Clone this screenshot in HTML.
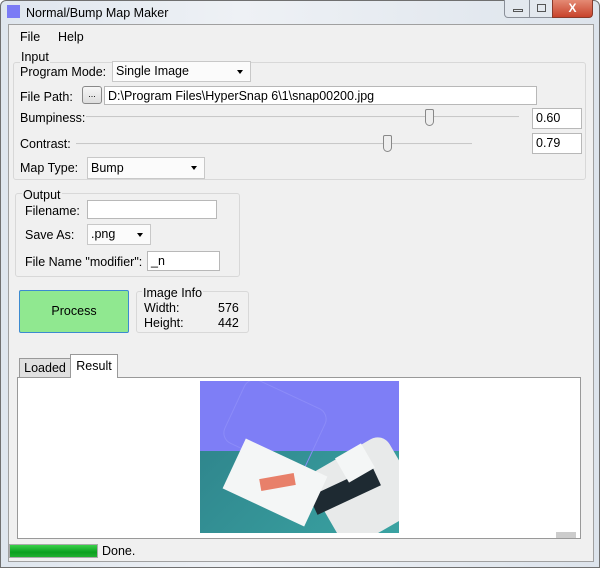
<!DOCTYPE html><html><head><style>
*{box-sizing:border-box}
body{margin:0;width:600px;height:568px;overflow:hidden;background:#fff;font-family:"Liberation Sans",sans-serif;font-size:12.5px;color:#000;position:relative}
.a{position:absolute}
.grp{position:absolute;border:1px solid #d8d8d8;border-radius:3px}
.lab{position:absolute;background:#f0f0f0;padding:0 1px;line-height:14px}
.tb{position:absolute;background:#fff;border:1px solid #b8b8b8;line-height:18px;padding-left:3px}
.cb{position:absolute;background:#fbfbfb;border:1px solid #c8c8c8;line-height:19px;padding-left:3px}
.cb:after{content:"";position:absolute;right:7px;top:8px;border:3.5px solid transparent;border-top:4px solid #000}
.trk{position:absolute;height:2px;background:#c8c8c8;border-bottom:1px solid #eee}
.th{position:absolute;width:9px;height:17px;background:#eee;border:1px solid #888;border-radius:2px 2px 5px 5px}
.t{position:absolute;top:0}
</style></head><body>
<div class="a" style="left:0;top:0;width:600px;height:568px;background:linear-gradient(90deg,#dfe6ee,#eef1f5 40%,#dde4ec);border:1px solid #707070;border-radius:6px 6px 0 0"></div>
<div class="a" style="left:7px;top:5px;width:13px;height:13px;background:#7b7bf5"></div>
<div class="a" style="left:26px;top:6px;font-size:12.5px">Normal/Bump Map Maker</div>
<div class="a" style="left:504px;top:0;width:26px;height:18px;border:1px solid #8a8f98;border-top:0;border-radius:0 0 0 4px;background:#e3e8ee"><div class="a" style="left:8px;top:9px;width:10px;height:3px;border:1px solid #555"></div></div>
<div class="a" style="left:529px;top:0;width:24px;height:18px;border:1px solid #8a8f98;border-top:0;background:#e3e8ee"><div class="a" style="left:7px;top:4px;width:9px;height:8px;border:1px solid #555"></div></div>
<div class="a" style="left:552px;top:0;width:41px;height:18px;border:1px solid #8a3a2a;border-top:0;border-radius:0 0 4px 0;background:linear-gradient(#e48a74,#c8432b);color:#fff;font-weight:bold;text-align:center;line-height:16px;font-size:12px">X</div>
<div class="a" style="left:8px;top:24px;width:586px;height:538px;background:#f0f0f0;border:1px solid #a0a0a0"></div>
<div class="a" style="left:20px;top:30px">File</div><div class="a" style="left:58px;top:30px">Help</div>
<div class="grp" style="left:13px;top:62px;width:573px;height:118px"></div>
<div class="lab" style="left:20px;top:50px">Input</div>
<div class="a" style="left:20px;top:65px">Program Mode:</div>
<div class="cb" style="left:112px;top:61px;width:139px;height:21px">Single Image</div>
<div class="a" style="left:20px;top:90px">File Path:</div>
<div class="a" style="left:82px;top:86px;width:20px;height:18px;border:1px solid #888;border-radius:3px;background:linear-gradient(#f6f6f6,#ddd);font-size:9px;text-align:center;line-height:14px">...</div>
<div class="tb" style="left:104px;top:86px;width:433px;height:19px">D:\Program Files\HyperSnap 6\1\snap00200.jpg</div>
<div class="a" style="left:20px;top:111px">Bumpiness:</div>
<div class="trk" style="left:86px;top:116px;width:433px"></div>
<div class="th" style="left:425px;top:109px"></div>
<div class="tb" style="left:532px;top:108px;width:50px;height:21px;line-height:19px">0.60</div>
<div class="a" style="left:20px;top:137px">Contrast:</div>
<div class="trk" style="left:76px;top:143px;width:396px"></div>
<div class="th" style="left:383px;top:135px"></div>
<div class="tb" style="left:532px;top:133px;width:50px;height:21px;line-height:19px">0.79</div>
<div class="a" style="left:20px;top:161px">Map Type:</div>
<div class="cb" style="left:87px;top:157px;width:118px;height:22px;line-height:20px">Bump</div>
<div class="grp" style="left:15px;top:193px;width:225px;height:84px"></div>
<div class="lab" style="left:22px;top:188px">Output</div>
<div class="a" style="left:25px;top:204px">Filename:</div>
<div class="tb" style="left:87px;top:200px;width:130px;height:19px"></div>
<div class="a" style="left:25px;top:228px">Save As:</div>
<div class="cb" style="left:87px;top:224px;width:64px;height:21px">.png</div>
<div class="a" style="left:25px;top:255px">File Name "modifier":</div>
<div class="tb" style="left:147px;top:251px;width:73px;height:20px">_n</div>
<div class="a" style="left:19px;top:290px;width:110px;height:43px;background:#90e890;border:1px solid #3c8ad0;border-radius:2px;text-align:center;line-height:41px">Process</div>
<div class="grp" style="left:136px;top:291px;width:113px;height:42px"></div>
<div class="lab" style="left:142px;top:286px">Image Info</div>
<div class="a" style="left:144px;top:301px">Width:</div><div class="a" style="left:218px;top:301px">576</div>
<div class="a" style="left:144px;top:316px">Height:</div><div class="a" style="left:218px;top:316px">442</div>
<div class="a" style="left:19px;top:358px;width:52px;height:20px;border:1px solid #999;background:#e0e0e0;text-align:center;line-height:19px">Loaded</div>
<div class="a" style="left:70px;top:354px;width:48px;height:24px;border:1px solid #999;border-bottom:0;background:#fff;text-align:center;line-height:23px">Result</div>
<div class="a" style="left:17px;top:377px;width:564px;height:162px;border:1px solid #999;background:#fff"></div>
<div class="a" style="left:71px;top:377px;width:46px;height:2px;background:#fff"></div>
<div class="a" style="left:200px;top:381px;width:199px;height:152px;overflow:hidden;background:linear-gradient(135deg,#2d7f88,#3aa3a2)">
 <div class="a" style="left:0;top:0;width:199px;height:70px;background:#7e7ef6"></div>
 <div class="a" style="left:30px;top:10px;width:90px;height:70px;border:1px solid #8c8cf8;border-radius:12px;transform:rotate(25deg)"></div>
 <div class="a" style="left:250px;top:0"></div>
 <div class="a" style="left:106px;top:438px"></div>
 <div class="a" style="left:120px;top:68px;width:90px;height:85px;background:#e8eaea;border-radius:14px;transform:rotate(-30deg)"></div>
 <div class="a" style="left:110px;top:100px;width:70px;height:20px;background:#1e2a32;transform:rotate(-25deg)"></div>
 <div class="a" style="left:30px;top:74px;width:90px;height:55px;background:#f4f6f6;transform:rotate(25deg)"></div>
 <div class="a" style="left:60px;top:95px;width:35px;height:12px;background:#e8806a;transform:rotate(-10deg)"></div>
 <div class="a" style="left:140px;top:68px;width:30px;height:28px;background:#f4f6f6;transform:rotate(-30deg)"></div>
</div>
<div class="a" style="left:556px;top:532px;width:20px;height:6px;background:#ccc"></div>
<div class="a" style="left:9px;top:544px;width:89px;height:14px;border:1px solid #aaa;background:linear-gradient(#3ad04a,#0ca020 60%,#20b030)"></div>
<div class="a" style="left:102px;top:544px">Done.</div>
</body></html>
